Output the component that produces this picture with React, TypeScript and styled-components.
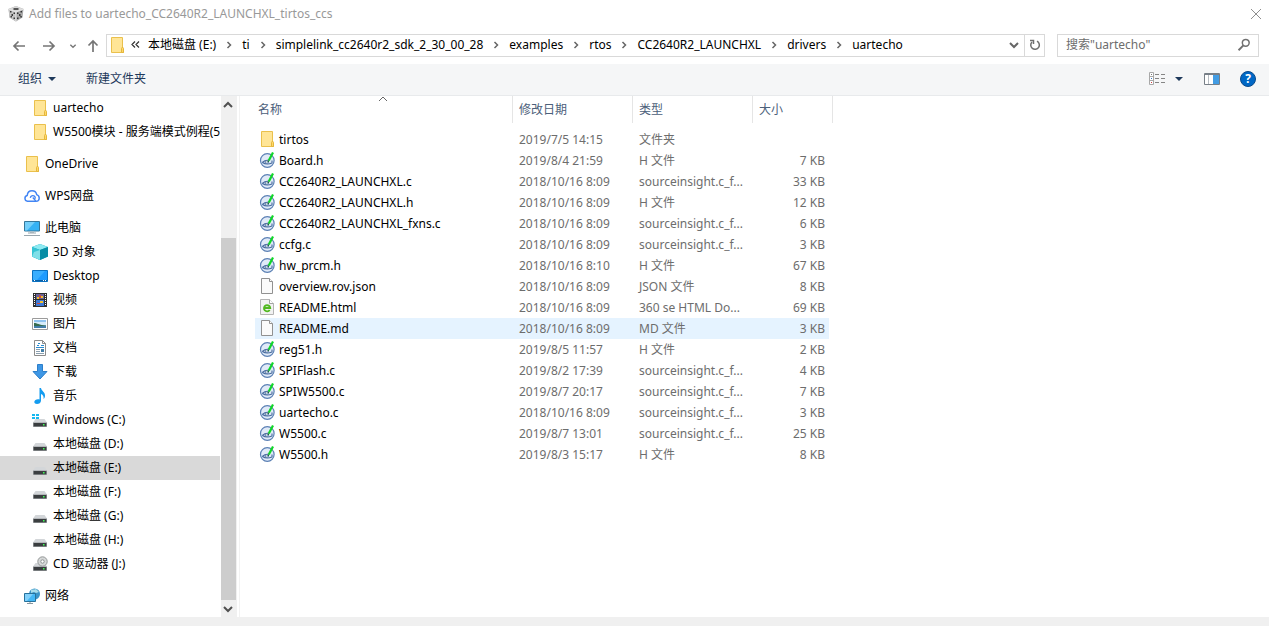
import React from "react";
import styled, { createGlobalStyle } from "styled-components";

const GlobalStyle = createGlobalStyle`
  *, *::before, *::after { box-sizing: border-box; }
  body {
    margin: 0;
    background: #fff;
    color: #000;
    font-family: "Noto Sans", "Noto Sans CJK SC", sans-serif;
    font-size: 12px;
    line-height: 20px;
  }
  button, input { font: inherit; color: inherit; }
  a { color: inherit; text-decoration: none; }
  svg { display: block; flex: none; }
`;

/* ---------- layout ---------- */

const Dialog = styled.div`
  display: flex;
  flex-direction: column;
  min-height: 100vh;
`;

const TitleBar = styled.header`
  display: flex;
  align-items: center;
  gap: 5px;
  height: 28px;
  padding: 0 5px 0 8px;
`;

const Title = styled.h1`
  flex: 1;
  margin: 0;
  font-size: 12px;
  font-weight: 400;
  color: #999;
`;

const NavBar = styled.div`
  display: flex;
  align-items: center;
  height: 36px;
  padding: 0 10px 2px 9px;
`;

const PlainButton = styled.button<{ $width?: number }>`
  display: flex;
  flex: none;
  align-items: center;
  justify-content: center;
  width: ${(p) => (p.$width ? `${p.$width}px` : "auto")};
  height: 22px;
  padding: 0;
  border: 0;
  background: transparent;
`;

const HistoryButtons = styled.div`
  display: flex;
  flex: none;
  align-items: center;
  width: 97px;
  padding: 2px 5px 0 0;
`;

const UpButton = styled(PlainButton)`
  margin-left: auto;
`;

const AddressBar = styled.nav`
  display: flex;
  flex: 1;
  align-items: center;
  min-width: 0;
  height: 23px;
  padding-left: 2px;
  border: 1px solid #d9d9d9;
`;

const Crumbs = styled.ol`
  display: flex;
  flex: 1;
  align-items: center;
  min-width: 0;
  margin: 0;
  padding: 0 0 0 6px;
  overflow: hidden;
  list-style: none;
  white-space: nowrap;
`;

const Crumb = styled.li`
  display: flex;
  align-items: center;
`;

const CrumbGap = styled.span`
  display: flex;
  justify-content: center;
  width: 26px;
`;

const RefreshButton = styled(PlainButton)`
  height: 21px;
  border-left: 1px solid #d9d9d9;
`;

const SearchBox = styled.label`
  display: flex;
  align-items: center;
  width: 202px;
  height: 23px;
  margin-left: 12px;
  padding: 0 7px 0 8px;
  border: 1px solid #d9d9d9;
`;

const SearchInput = styled.input`
  flex: 1;
  min-width: 0;
  height: 20px;
  padding: 0;
  border: 0;
  outline: 0;
  background: transparent;
  &::placeholder { color: #6d6d6d; opacity: 1; }
`;

const Toolbar = styled.div`
  display: flex;
  align-items: center;
  height: 32px;
  padding: 0 13px 1px 18px;
  border-bottom: 1px solid #e8eaec;
  background: #f5f6f7;
  color: #1e395b;
`;

const ToolButton = styled(PlainButton)`
  gap: 6px;
`;

const ToolGroup = styled.div<{ $gap: number; $end?: boolean }>`
  display: flex;
  align-items: center;
  gap: ${(p) => p.$gap}px;
  margin-left: ${(p) => (p.$end ? "auto" : "0")};
`;

const HelpButton = styled(PlainButton)`
  width: 16px;
  height: 16px;
  border: 1px solid #0a4a8c;
  border-radius: 50%;
  background: #0067c5;
  color: #fff;
  font-size: 12px;
  font-weight: 700;
  line-height: 14px;
`;

const Content = styled.main`
  display: flex;
  flex: 1;
`;

const Sidebar = styled.aside`
  display: flex;
  flex: none;
  width: 240px;
  border-right: 1px solid #f2f2f2;
`;

const Tree = styled.ul`
  width: 220px;
  margin: 0 1px 0 0;
  padding: 0 0 9px;
  list-style: none;
`;

const TreeItem = styled.li<{ $nested?: boolean; $spaced?: boolean; $selected?: boolean }>`
  margin-top: ${(p) => (p.$spaced ? 8 : 0)}px;
  padding-left: ${(p) => (p.$nested ? 32 : 24)}px;
  background: ${(p) => (p.$selected ? "#d9d9d9" : "transparent")};
`;

const TreeLink = styled.a`
  display: flex;
  align-items: center;
  gap: 5px;
  height: 24px;
  overflow: hidden;
  white-space: nowrap;
`;

const ScrollRail = styled.div`
  display: flex;
  flex-direction: column;
  width: 16px;
  background: #f0f0f0;
`;

const ScrollButton = styled(PlainButton)`
  width: 14px;
  height: 17px;
`;

const ScrollTrack = styled.div`
  display: flex;
  flex: 1;
  flex-direction: column;
`;

const ScrollSpace = styled.div`
  flex: 125;
`;

const ScrollThumb = styled.div`
  flex: 362;
  width: 15px;
  background: #cdcdcd;
`;

const FilePane = styled.section`
  flex: 1;
  min-width: 0;
  padding-left: 15px;
`;

const FileTable = styled.table`
  width: 578px;
  table-layout: fixed;
  border-collapse: separate;
  border-spacing: 0;
`;

const Column = styled.col<{ $width: number }>`
  width: ${(p) => p.$width}px;
`;

const HeadCell = styled.th<{ $first?: boolean }>`
  position: relative;
  height: 27px;
  padding: 0 0 0 ${(p) => (p.$first ? 3 : 6)}px;
  border-right: 1px solid #e5e5e5;
  color: #4c607a;
  font-weight: 400;
  text-align: left;
`;

const SortMark = styled.span`
  position: absolute;
  top: -3px;
  left: 50%;
  margin-left: -7px;
`;

const FileRows = styled.tbody`
  &::before { content: ""; display: table-row; height: 6px; }
`;

const FileRow = styled.tr<{ $hover?: boolean }>`
  & > td { background-color: ${(p) => (p.$hover ? "#e5f3ff" : "transparent")}; }
`;

const Cell = styled.td<{ $size?: boolean }>`
  height: 21px;
  padding: 0 ${(p) => (p.$size ? 4 : 6)}px 0 6px;
  border-right: ${(p) => (p.$size ? "4px solid transparent" : "0")};
  background-clip: padding-box;
  overflow: hidden;
  color: #6d6d6d;
  text-align: ${(p) => (p.$size ? "right" : "left")};
  white-space: nowrap;
`;

const NameCell = styled(Cell)`
  padding: 0 0 0 4px;
  color: #000;
`;

const FileName = styled.div`
  display: flex;
  align-items: center;
  gap: 4px;
  & > svg { margin-bottom: 1px; }
`;

const Footer = styled.footer`
  height: 9px;
  background: #f0f0f0;
`;

/* ---------- icons ---------- */

const Icon = ({ children, size = 16 }: { children: React.ReactNode; size?: number }) => (
  <svg width={size} height={size} viewBox="0 0 16 16" fill="none" aria-hidden="true">
    {children}
  </svg>
);

const FolderIcon = () => (
  <Icon>
    <path d="M2.500.5h11v11l1 .5v3.500h-12z" fill="#ffe596" stroke="#eac04c" />
    <path d="M12.500 15.500v-4l1-1.500 1 1.500v4z" fill="#ffd968" stroke="#e5b63d" />
  </Icon>
);

const CubeIcon = () => (
  <Icon>
    <path d="M8 0 15.500 3 14.500 11.500 8 15.500 1.500 11.500 .5 3z" fill="#a8a8a8" />
    <path d="M8 0 15.500 3 8 6 .5 3z" fill="#d8d8d8" />
    <path d="M8 6v9.500l-6.500-4L.5 3z" fill="#c4c4c4" />
    <path d="M5.500 2h5v2h-5z" fill="#565656" />
    <path d="M2 5h1.500v1.500H2zM5.500 6.500H7V8H5.500zM3.500 8H5v2H3.500zM2.500 10H4v1.500H2.500zM5.500 11.500H7V13H5.500z" fill="#3a3a3a" />
    <path d="M12.500 5H14v1.500h-1.500zM9 6.500h1.500V8H9zM11 8h1.500v2H11zM12.300 10h1.500v1.500h-1.500zM9 11.500h1.500V13H9z" fill="#333" />
    <path d="M8 6v9.500M.5 3 8 6l7.500-3" stroke="#efefef" strokeWidth=".8" />
  </Icon>
);

const CloudIcon = () => (
  <Icon>
    <path
      d="M6 13.200H3.500a2.900 2.900 0 0 1-.3-5.700C3.500 4.600 5.500 2.800 8 2.800c2.400 0 4.200 1.500 4.700 3.800 1.500.5 2.500 1.700 2.500 3.300 0 1.900-1.400 3.300-3.200 3.300H6"
      stroke="#4285f4" strokeWidth="1.500"
    />
    <path d="M6.300 9.800c.3-1.500 1.300-2.200 2.500-2.200 1.700 0 2.700 1.400 2.400 3M8.800 9.500l3 3.500" stroke="#4285f4" strokeWidth="1.300" />
  </Icon>
);

const ComputerIcon = () => (
  <Icon>
    <path d="M.5 1.500h15v9.500H.5z" fill="#35b2f5" stroke="#35779a" />
    <path d="M1 2h10L3 10.500H1z" fill="#74cffa" />
    <path d="M6 11.500h4v1.500H6z" fill="#b9c4cb" />
    <path d="M4 13h8M0 15.500h16" stroke="#9aa6ad" />
  </Icon>
);

const ObjectsIcon = () => (
  <Icon>
    <path d="M0 3 8 0l8 3v9.500L8 16 0 12.500z" fill="#0fa5b9" />
    <path d="M0 3 8 0l8 3-8 3z" fill="#8eeaf2" />
    <path d="M0 3l8 3v10l-8-3.500z" fill="#35c4d4" />
    <path d="m2 8 6-2v10L0 12.500z" fill="#7fdfe8" />
    <path d="M8 6l8-3v9.500L8 16z" fill="#078da5" />
  </Icon>
);

const DesktopIcon = () => (
  <Icon>
    <path d="M.5 2.500h15v11H.5z" fill="#1e9bff" stroke="#0b72c2" />
    <path d="M1 3h12L5 12H1z" fill="#39aeff" />
    <path d="M1 12.500h14" stroke="#0a5fa5" />
    <path d="M2 12.500h1M11 12.500h1M13 12.500h1" stroke="#fff" />
  </Icon>
);

const VideoIcon = () => (
  <Icon>
    <path d="M1 1h14v14H1z" fill="#303030" />
    <path d="M4 2h8v5H4z" fill="#6a6498" />
    <path d="M4 8h8v6H4z" fill="#3d79d8" />
    <path d="M5 5h2v2H5zM9 4h2v2H9zM8 9h3v2H8z" fill="#f2c12e" />
    <path d="M7 3h2v3H7zM5 11h3v1H5z" fill="#cf4b3d" />
    <path d="M2.500 2v12M13.500 2v12" stroke="#fff" strokeWidth="1" strokeDasharray="1 1" />
  </Icon>
);

const PictureIcon = () => (
  <Icon>
    <path d="M.5 2.500h15v11H.5z" fill="#fff" stroke="#9b9b9b" />
    <path d="M2 4h12v8H2z" fill="#8fc3f0" />
    <path d="M2 6h12v3H2z" fill="#d5ebfa" />
    <path d="M2 7c3 0 5 2 12 2.500V10H2z" fill="#376c50" />
    <path d="M2 10h12v2H2z" fill="#427daa" />
  </Icon>
);

const DocumentIcon = () => (
  <Icon>
    <path d="M2.500.5h8l3 3v12h-11z" fill="#fff" stroke="#8b8b8b" />
    <path d="M10.500.5v3h3" stroke="#8b8b8b" />
    <path d="M6 3.500h2M5 5.500h2M9 5.500h3M4 7.500h8" stroke="#298bd0" />
    <path d="M4 9.500h4M4 11.500h4M4 13.500h8" stroke="#8ca0b0" />
    <path d="M9 9h3v3H9z" fill="#417da6" />
  </Icon>
);

const DownloadIcon = () => (
  <Icon>
    <path d="M5.500.5h5v7h4.500l-7 7.500-7-7.500h4.500z" fill="#3e97e5" stroke="#2c7fca" />
  </Icon>
);

const MusicIcon = () => (
  <Icon>
    <path d="M7.500 0h1.500c.3 3 4.500 4 4 8-.1 1.600-.8 2.500-1.500 3 .5-2.500-.3-4-2.500-5v6.500C9 15 7 16 5 16c-1.600 0-2.700-.8-2.700-2 0-1.900 2.700-3.300 5.200-2.500z" fill="#149cf0" />
  </Icon>
);

const DriveBody = () => (
  <>
    <path d="M3.500 7h9l2.500 3.500H1z" fill="#d3d6d9" />
    <path d="M1 10h14v5H1z" fill="#b4b7ba" />
    <path d="M1.500 11h13v3.500h-13z" fill="#3b3e40" />
    <path d="M11 12h1.500v1.500H11z" fill="#3fff54" />
  </>
);

const DriveIcon = () => (
  <Icon>
    <DriveBody />
  </Icon>
);

const SystemDriveIcon = () => (
  <Icon>
    <DriveBody />
    <path d="M0 2h3v2H0zM4 2h3v2H4zM0 5h3v2H0zM4 5h3v2H4z" fill="#16b8f0" />
  </Icon>
);

const DiscDriveIcon = () => (
  <Icon>
    <DriveBody />
    <circle cx="10.500" cy="5.500" r="4.700" fill="#d6d8d8" stroke="#949898" />
    <circle cx="10.500" cy="5.500" r="1.700" fill="#fff" stroke="#8d9191" />
  </Icon>
);

const NetworkIcon = () => (
  <Icon>
    <circle cx="10.500" cy="6" r="5.500" fill="#3b95c8" />
    <path d="M7 2c2-1 3 0 5-1l3 3-3 1-2-1-3 1z" fill="#a8dcea" />
    <path d="M.5 5.500h11v8H.5z" fill="#43b7f5" stroke="#27719b" />
    <path d="M1 6h8l-6 7H1z" fill="#81d0fa" />
    <path d="M3 15.500h6M6 14v1" stroke="#88979f" />
  </Icon>
);

const SourceIcon = () => (
  <Icon>
    <circle cx="8.300" cy="8.500" r="6.800" fill="#e0eaf8" stroke="#5b80b4" strokeWidth="1.200" />
    <path d="M3.300 10.500c2-1.800 4-2.500 6-2.200M13 8.500v2.500c-3 1.200-7 1.200-9.700-.5" stroke="#46699c" strokeWidth="1.100" />
    <ellipse cx="7.800" cy="10" rx="1.800" ry="1.200" fill="#fff" stroke="#46699c" strokeWidth=".9" />
    <path d="M14 .5 9.800 8.500" stroke="#10d628" strokeWidth="2.200" />
    <path d="m9.800 8.500-.8 1.500" stroke="#126b2b" strokeWidth="1.200" />
  </Icon>
);

const PageIcon = () => (
  <Icon>
    <path d="M2.500.5h8l3 3v12h-11z" fill="#fafafa" stroke="#919191" />
    <path d="M10.500.5v3h3" fill="#fff" stroke="#919191" />
  </Icon>
);

const HtmlIcon = () => (
  <Icon>
    <path d="M1.500.5h9l4 4v11h-13z" fill="#f2f2f2" stroke="#b4b4b4" />
    <path d="M10.500.5v4h4" fill="#fff" stroke="#a3a3a3" />
    <path d="M5 9h6.200A3.100 3.100 0 1 0 10.700 11" stroke="#50b81e" strokeWidth="1.900" />
  </Icon>
);

const ArrowIcon = ({ direction }: { direction: "left" | "right" | "up" }) => (
  <Icon>
    <path
      d={{
        left: "M14 8H3M7.500 3.500 3 8l4.500 4.500",
        right: "M2 8h11M8.500 3.500 13 8l-4.500 4.500",
        up: "M8 14V3M3.500 7.500 8 3l4.500 4.500",
      }[direction]}
      stroke="#757575"
      strokeWidth="1.700"
    />
  </Icon>
);

const Chevron = ({ direction, size = 12, color = "#666", weight = 1.5 }: {
  direction: "up" | "down" | "right";
  size?: number;
  color?: string;
  weight?: number;
}) => (
  <svg width={size} height={size} viewBox="0 0 12 12" fill="none" aria-hidden="true">
    <path
      d={{ up: "M2 8l4-4 4 4", down: "M2 4l4 4 4-4", right: "M4.500 3l3 3-3 3" }[direction]}
      stroke={color}
      strokeWidth={weight}
    />
  </svg>
);

const Caret = () => (
  <svg width="8" height="4" viewBox="0 0 8 4" aria-hidden="true">
    <path d="M0 0h8L4 4z" fill="#1e395b" />
  </svg>
);

const CloseIcon = () => (
  <svg width="12" height="12" viewBox="0 0 12 12" aria-hidden="true">
    <path d="m1 1 10 10M11 1 1 11" stroke="#8f8f8f" />
  </svg>
);

const RefreshIcon = () => (
  <Icon>
    <path d="M10 4.200A4.300 4.300 0 1 1 5 5" stroke="#6f6f6f" strokeWidth="1.500" />
    <path d="M3 3.500h3.500V7" stroke="#6f6f6f" strokeWidth="1.500" />
  </Icon>
);

const SearchIcon = () => (
  <Icon size={14}>
    <circle cx="10" cy="5.500" r="3.900" stroke="#707070" strokeWidth="1.700" />
    <path d="m7.300 8.500-5.500 5.500" stroke="#707070" strokeWidth="2.200" />
  </Icon>
);

const ViewIcon = () => (
  <svg width="17" height="14" viewBox="0 0 17 14" fill="none" aria-hidden="true">
    <path d="M.5.5h4v12h-4zM.5 4.500h4M.5 8.500h4" fill="#fff" stroke="#a8a8a8" />
    <path d="M2 2h1v1H2z" fill="#777" />
    <path d="M2 6h1v1H2z" fill="#3478c6" />
    <path d="M2 10h1v1H2z" fill="#d13c3c" />
    <path d="M6 2.500h4M12 2.500h4M6 6.500h4M12 6.500h4M6 10.500h4M12 10.500h4" stroke="#858585" />
  </svg>
);

const PreviewIcon = () => (
  <svg width="16" height="12" viewBox="0 0 16 12" fill="none" aria-hidden="true">
    <path d="M.5.5h15v11H.5z" fill="#fff" stroke="#777f87" />
    <path d="M1 1.500h14" stroke="#777f87" />
    <path d="M4.500 2v9" stroke="#b6bcc2" />
    <path d="M9 2h6v9H9z" fill="#429ce3" />
  </svg>
);

/* ---------- data ---------- */

const crumbs = ["本地磁盘 (E:)", "ti", "simplelink_cc2640r2_sdk_2_30_00_28", "examples", "rtos", "CC2640R2_LAUNCHXL", "drivers", "uartecho"];

type Place = { label: string; icon: React.ComponentType; nested?: boolean; spaced?: boolean; selected?: boolean };

const places: Place[] = [
  { label: "uartecho", icon: FolderIcon, nested: true },
  { label: "W5500模块 - 服务端模式例程(5", icon: FolderIcon, nested: true },
  { label: "OneDrive", icon: FolderIcon, spaced: true },
  { label: "WPS网盘", icon: CloudIcon, spaced: true },
  { label: "此电脑", icon: ComputerIcon, spaced: true },
  { label: "3D 对象", icon: ObjectsIcon, nested: true },
  { label: "Desktop", icon: DesktopIcon, nested: true },
  { label: "视频", icon: VideoIcon, nested: true },
  { label: "图片", icon: PictureIcon, nested: true },
  { label: "文档", icon: DocumentIcon, nested: true },
  { label: "下载", icon: DownloadIcon, nested: true },
  { label: "音乐", icon: MusicIcon, nested: true },
  { label: "Windows (C:)", icon: SystemDriveIcon, nested: true },
  { label: "本地磁盘 (D:)", icon: DriveIcon, nested: true },
  { label: "本地磁盘 (E:)", icon: DriveIcon, nested: true, selected: true },
  { label: "本地磁盘 (F:)", icon: DriveIcon, nested: true },
  { label: "本地磁盘 (G:)", icon: DriveIcon, nested: true },
  { label: "本地磁盘 (H:)", icon: DriveIcon, nested: true },
  { label: "CD 驱动器 (J:)", icon: DiscDriveIcon, nested: true },
  { label: "网络", icon: NetworkIcon, spaced: true },
];

type FileEntry = [name: string, modified: string, type: string, size: string, icon: React.ComponentType];

const files: FileEntry[] = [
  ["tirtos", "2019/7/5 14:15", "文件夹", "", FolderIcon],
  ["Board.h", "2019/8/4 21:59", "H 文件", "7 KB", SourceIcon],
  ["CC2640R2_LAUNCHXL.c", "2018/10/16 8:09", "sourceinsight.c_f...", "33 KB", SourceIcon],
  ["CC2640R2_LAUNCHXL.h", "2018/10/16 8:09", "H 文件", "12 KB", SourceIcon],
  ["CC2640R2_LAUNCHXL_fxns.c", "2018/10/16 8:09", "sourceinsight.c_f...", "6 KB", SourceIcon],
  ["ccfg.c", "2018/10/16 8:09", "sourceinsight.c_f...", "3 KB", SourceIcon],
  ["hw_prcm.h", "2018/10/16 8:10", "H 文件", "67 KB", SourceIcon],
  ["overview.rov.json", "2018/10/16 8:09", "JSON 文件", "8 KB", PageIcon],
  ["README.html", "2018/10/16 8:09", "360 se HTML Do...", "69 KB", HtmlIcon],
  ["README.md", "2018/10/16 8:09", "MD 文件", "3 KB", PageIcon],
  ["reg51.h", "2019/8/5 11:57", "H 文件", "2 KB", SourceIcon],
  ["SPIFlash.c", "2019/8/2 17:39", "sourceinsight.c_f...", "4 KB", SourceIcon],
  ["SPIW5500.c", "2019/8/7 20:17", "sourceinsight.c_f...", "7 KB", SourceIcon],
  ["uartecho.c", "2018/10/16 8:09", "sourceinsight.c_f...", "3 KB", SourceIcon],
  ["W5500.c", "2019/8/7 13:01", "sourceinsight.c_f...", "25 KB", SourceIcon],
  ["W5500.h", "2019/8/3 15:17", "H 文件", "8 KB", SourceIcon],
];

export default function App() {
  return (
    <Dialog>
      <GlobalStyle />
      <TitleBar>
        <CubeIcon />
        <Title>Add files to uartecho_CC2640R2_LAUNCHXL_tirtos_ccs</Title>
        <PlainButton $width={16} aria-label="关闭"><CloseIcon /></PlainButton>
      </TitleBar>

      <NavBar>
        <HistoryButtons>
          <PlainButton $width={20} aria-label="后退"><ArrowIcon direction="left" /></PlainButton>
          <PlainButton $width={40} aria-label="前进"><ArrowIcon direction="right" /></PlainButton>
          <PlainButton $width={8} aria-label="最近位置"><Chevron direction="down" size={8} color="#777" weight={2} /></PlainButton>
          <UpButton $width={16} aria-label="上移"><ArrowIcon direction="up" /></UpButton>
        </HistoryButtons>
        <AddressBar aria-label="地址">
          <FolderIcon />
          <Crumbs>
            <Crumb>
              <svg width="17" height="12" viewBox="0 0 17 12" fill="none" aria-hidden="true">
                <path d="M4 2.500 1 5.500l3 3M8 2.500 5 5.500l3 3" stroke="#333" strokeWidth="1.200" />
              </svg>
            </Crumb>
            {crumbs.map((name, i) => (
              <Crumb key={name}>
                {i > 0 && <CrumbGap><Chevron direction="right" /></CrumbGap>}
                <a href="#">{name}</a>
              </Crumb>
            ))}
          </Crumbs>
          <PlainButton $width={20} aria-label="历史记录"><Chevron direction="down" weight={2} /></PlainButton>
          <RefreshButton $width={20} aria-label="刷新"><RefreshIcon /></RefreshButton>
        </AddressBar>
        <SearchBox>
          <SearchInput type="text" aria-label="搜索" placeholder={'搜索"uartecho"'} />
          <SearchIcon />
        </SearchBox>
      </NavBar>

      <Toolbar>
        <ToolGroup $gap={30}>
          <ToolButton>组织<Caret /></ToolButton>
          <ToolButton>新建文件夹</ToolButton>
        </ToolGroup>
        <ToolGroup $gap={20} $end>
          <ToolGroup $gap={8}>
            <PlainButton $width={18} aria-label="视图"><ViewIcon /></PlainButton>
            <PlainButton $width={10} aria-label="更多选项"><Caret /></PlainButton>
          </ToolGroup>
          <PlainButton $width={16} aria-label="预览窗格"><PreviewIcon /></PlainButton>
          <HelpButton>?</HelpButton>
        </ToolGroup>
      </Toolbar>

      <Content>
        <Sidebar>
          <Tree>
            {places.map(({ label, icon: PlaceIcon, nested, spaced, selected }) => (
              <TreeItem key={label} $nested={nested} $spaced={spaced} $selected={selected}>
                <TreeLink href="#"><PlaceIcon />{label}</TreeLink>
              </TreeItem>
            ))}
          </Tree>
          <ScrollRail>
            <ScrollButton aria-label="向上滚动"><Chevron direction="up" weight={2} color="#505050" /></ScrollButton>
            <ScrollTrack><ScrollSpace /><ScrollThumb /></ScrollTrack>
            <ScrollButton aria-label="向下滚动"><Chevron direction="down" weight={2} color="#505050" /></ScrollButton>
          </ScrollRail>
        </Sidebar>

        <FilePane>
          <FileTable>
            <colgroup>
              <Column $width={258} />
              <Column $width={120} />
              <Column $width={120} />
              <Column $width={80} />
            </colgroup>
            <thead>
              <tr>
                <HeadCell $first>名称<SortMark><Chevron direction="up" weight={1} /></SortMark></HeadCell>
                <HeadCell>修改日期</HeadCell>
                <HeadCell>类型</HeadCell>
                <HeadCell>大小</HeadCell>
              </tr>
            </thead>
            <FileRows>
              {files.map(([name, modified, type, size, FileIcon]) => (
                <FileRow key={name} $hover={name === "README.md"}>
                  <NameCell><FileName><FileIcon />{name}</FileName></NameCell>
                  <Cell>{modified}</Cell>
                  <Cell>{type}</Cell>
                  <Cell $size>{size}</Cell>
                </FileRow>
              ))}
            </FileRows>
          </FileTable>
        </FilePane>
      </Content>
      <Footer />
    </Dialog>
  );
}
